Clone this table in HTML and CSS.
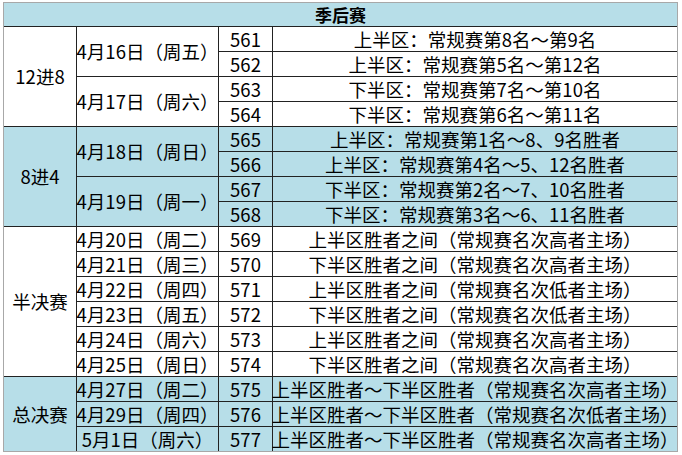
FILE: index.html
```html
<!DOCTYPE html>
<html lang="zh">
<head>
<meta charset="utf-8">
<link rel="stylesheet" href="styles.css">
</head>
<body>
<div class="sheet">
  <div class="cell head">季后赛</div>

  <div class="cell r4">12进8</div>
  <div class="cell r2">4月16日（周五）</div>
  <div class="cell">561</div>
  <div class="cell">上半区：常规赛第8名～第9名</div>
  <div class="cell">562</div>
  <div class="cell">上半区：常规赛第5名～第12名</div>
  <div class="cell r2">4月17日（周六）</div>
  <div class="cell">563</div>
  <div class="cell">下半区：常规赛第7名～第10名</div>
  <div class="cell">564</div>
  <div class="cell">下半区：常规赛第6名～第11名</div>

  <div class="cell blue r4">8进4</div>
  <div class="cell blue r2">4月18日（周日）</div>
  <div class="cell blue">565</div>
  <div class="cell blue">上半区：常规赛第1名～8、9名胜者</div>
  <div class="cell blue">566</div>
  <div class="cell blue">上半区：常规赛第4名～5、12名胜者</div>
  <div class="cell blue r2">4月19日（周一）</div>
  <div class="cell blue">567</div>
  <div class="cell blue">下半区：常规赛第2名～7、10名胜者</div>
  <div class="cell blue">568</div>
  <div class="cell blue">下半区：常规赛第3名～6、11名胜者</div>

  <div class="cell r6">半决赛</div>
  <div class="cell">4月20日（周二）</div>
  <div class="cell">569</div>
  <div class="cell">上半区胜者之间（常规赛名次高者主场）</div>
  <div class="cell">4月21日（周三）</div>
  <div class="cell">570</div>
  <div class="cell">下半区胜者之间（常规赛名次高者主场）</div>
  <div class="cell">4月22日（周四）</div>
  <div class="cell">571</div>
  <div class="cell">上半区胜者之间（常规赛名次低者主场）</div>
  <div class="cell">4月23日（周五）</div>
  <div class="cell">572</div>
  <div class="cell">下半区胜者之间（常规赛名次低者主场）</div>
  <div class="cell">4月24日（周六）</div>
  <div class="cell">573</div>
  <div class="cell">上半区胜者之间（常规赛名次高者主场）</div>
  <div class="cell">4月25日（周日）</div>
  <div class="cell">574</div>
  <div class="cell">下半区胜者之间（常规赛名次高者主场）</div>

  <div class="cell blue r3">总决赛</div>
  <div class="cell blue">4月27日（周二）</div>
  <div class="cell blue">575</div>
  <div class="cell blue">上半区胜者～下半区胜者（常规赛名次高者主场）</div>
  <div class="cell blue">4月29日（周四）</div>
  <div class="cell blue">576</div>
  <div class="cell blue">上半区胜者～下半区胜者（常规赛名次低者主场）</div>
  <div class="cell blue">5月1日（周六）</div>
  <div class="cell blue">577</div>
  <div class="cell blue">上半区胜者～下半区胜者（常规赛名次高者主场）</div>
</div>
</body>
</html>
```
FILE: styles.css
```css
html, body {
  margin: 0;
  padding: 0;
  background: #ffffff;
}

body {
  padding: 2px 0 0 3px;
  font-family: "Noto Sans CJK SC", "Noto Sans", sans-serif;
  font-size: 18.5px;
  color: #000;
}

.sheet {
  display: grid;
  grid-template-columns: 72px 141px 53px 404px;
  grid-template-rows: 23px repeat(17, 24px);
  gap: 1px;
  width: 673px;
  background: #222;
  border: 1px solid #a8a8a8;
}

.cell {
  display: flex;
  align-items: center;
  justify-content: center;
  background: #ffffff;
  white-space: nowrap;
  line-height: 1;
  overflow: visible;
}

.head {
  grid-column: 1 / -1;
  background: #b7dee8;
  font-weight: bold;
  font-size: 17px;
}

.blue {
  background: #b7dee8;
}

.r2 { grid-row: span 2; }
.r3 { grid-row: span 3; }
.r4 { grid-row: span 4; }
.r6 { grid-row: span 6; }
```
